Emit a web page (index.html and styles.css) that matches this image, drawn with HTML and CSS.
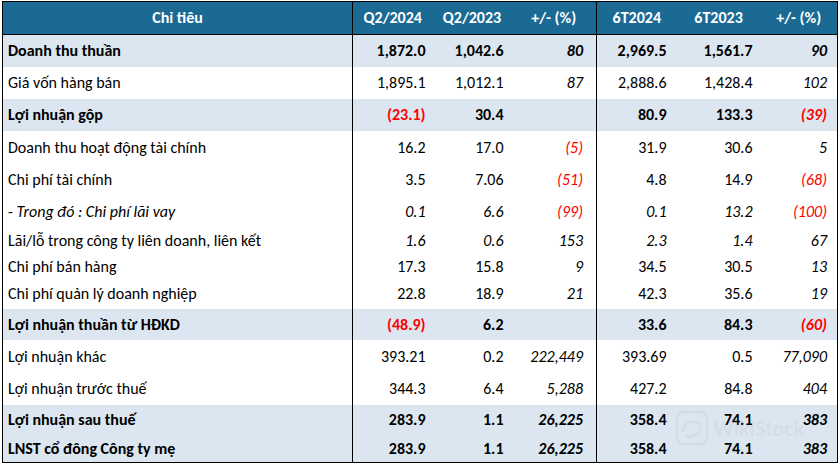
FILE: index.html
```html
<!DOCTYPE html>
<html lang="vi">
<head>
<meta charset="utf-8">
<title>Kết quả kinh doanh</title>
<link rel="stylesheet" href="styles.css">
</head>
<body>
<div class="wrap">
<table class="fin">
  <colgroup>
    <col class="c-label"><col class="c-q24"><col class="c-q23"><col class="c-qp">
    <col class="c-h24"><col class="c-h23"><col class="c-hp">
  </colgroup>
  <thead>
    <tr class="r-head">
      <th>Chỉ tiêu</th><th class="sep-l">Q2/2024</th><th>Q2/2023</th><th>+/- (%)</th>
      <th class="sep-l">6T2024</th><th>6T2023</th><th>+/- (%)</th>
    </tr>
  </thead>
  <tbody>
    <tr class="hl b h32"><td class="lbl">Doanh thu thuần</td><td class="n sep-l p7">1,872.0</td><td class="n p8">1,042.6</td><td class="n pct">80</td><td class="n sep-l p10">2,969.5</td><td class="n p8">1,561.7</td><td class="n pct2">90</td></tr>
    <tr class="h32"><td class="lbl">Giá vốn hàng bán</td><td class="n sep-l p7">1,895.1</td><td class="n p8">1,012.1</td><td class="n pct">87</td><td class="n sep-l p10">2,888.6</td><td class="n p8">1,428.4</td><td class="n pct2">102</td></tr>
    <tr class="hl b h32"><td class="lbl">Lợi nhuận gộp</td><td class="n sep-l p7 neg">(23.1)</td><td class="n p8">30.4</td><td class="n pct"></td><td class="n sep-l p10">80.9</td><td class="n p8">133.3</td><td class="n pct2 neg">(39)</td></tr>
    <tr class="h33"><td class="lbl">Doanh thu hoạt động tài chính</td><td class="n sep-l p7">16.2</td><td class="n p8">17.0</td><td class="n pct neg">(5)</td><td class="n sep-l p10">31.9</td><td class="n p8">30.6</td><td class="n pct2">5</td></tr>
    <tr class="h32"><td class="lbl">Chi phí tài chính</td><td class="n sep-l p7">3.5</td><td class="n p8">7.06</td><td class="n pct neg">(51)</td><td class="n sep-l p10">4.8</td><td class="n p8">14.9</td><td class="n pct2 neg">(68)</td></tr>
    <tr class="it h32"><td class="lbl"><span class="up">- </span>Trong đó : Chi phí lãi vay</td><td class="n sep-l p7">0.1</td><td class="n p8">6.6</td><td class="n pct neg">(99)</td><td class="n sep-l p10">0.1</td><td class="n p8">13.2</td><td class="n pct2 neg">(100)</td></tr>
    <tr class="it h26"><td class="lbl up">Lãi/lỗ trong công ty liên doanh, liên kết</td><td class="n sep-l p7">1.6</td><td class="n p8">0.6</td><td class="n pct">153</td><td class="n sep-l p10">2.3</td><td class="n p8">1.4</td><td class="n pct2">67</td></tr>
    <tr class="h25"><td class="lbl">Chi phí bán hàng</td><td class="n sep-l p7">17.3</td><td class="n p8">15.8</td><td class="n pct">9</td><td class="n sep-l p10">34.5</td><td class="n p8">30.5</td><td class="n pct2">13</td></tr>
    <tr class="h30"><td class="lbl">Chi phí quản lý doanh nghiệp</td><td class="n sep-l p7">22.8</td><td class="n p8">18.9</td><td class="n pct">21</td><td class="n sep-l p10">42.3</td><td class="n p8">35.6</td><td class="n pct2">19</td></tr>
    <tr class="hl b h31"><td class="lbl">Lợi nhuận thuần từ HĐKD</td><td class="n sep-l p7 neg">(48.9)</td><td class="n p8">6.2</td><td class="n pct"></td><td class="n sep-l p10">33.6</td><td class="n p8">84.3</td><td class="n pct2 neg">(60)</td></tr>
    <tr class="h33"><td class="lbl">Lợi nhuận khác</td><td class="n sep-l p7">393.21</td><td class="n p8">0.2</td><td class="n pct">222,449</td><td class="n sep-l p10">393.69</td><td class="n p8">0.5</td><td class="n pct2">77,090</td></tr>
    <tr class="h32"><td class="lbl">Lợi nhuận trước thuế</td><td class="n sep-l p7">344.3</td><td class="n p8">6.4</td><td class="n pct">5,288</td><td class="n sep-l p10">427.2</td><td class="n p8">84.8</td><td class="n pct2">404</td></tr>
    <tr class="hl b h30"><td class="lbl">Lợi nhuận sau thuế</td><td class="n sep-l p7">283.9</td><td class="n p8">1.1</td><td class="n pct">26,225</td><td class="n sep-l p10">358.4</td><td class="n p8">74.1</td><td class="n pct2">383</td></tr>
    <tr class="hl b h27"><td class="lbl">LNST cổ đông Công ty mẹ</td><td class="n sep-l p7">283.9</td><td class="n p8">1.1</td><td class="n pct">26,225</td><td class="n sep-l p10">358.4</td><td class="n p8">74.1</td><td class="n pct2">383</td></tr>
  </tbody>
</table>
<div class="wm" aria-hidden="true">
  <svg width="34" height="36" viewBox="0 0 34 36"><rect x="2" y="2" width="30" height="32" rx="7" fill="none" stroke="#999" stroke-width="2.5"/><path d="M8 22 C8 12 20 9 26 15 M11 26 C18 28 25 23 26 18" fill="none" stroke="#999" stroke-width="2.5"/></svg>
  <span>WikiStock</span>
</div>
</div>
</body>
</html>
```

FILE: styles.css
```css
html, body {
  margin: 0;
  padding: 0;
  background: #ffffff;
}
.wrap {
  position: relative;
  padding: 1px 0 0 2px;
  width: 839px;
  height: 465px;
  box-sizing: border-box;
  overflow: hidden;
}
.fin {
  border-collapse: collapse;
  table-layout: fixed;
  width: 835px;
  font-family: Carlito, Lato, "Liberation Sans", sans-serif;
  font-size: 16px;
  color: #000;
  border: 1px solid #000;
}
.c-label { width: 350px; }
.c-q24 { width: 80px; }
.c-q23 { width: 79px; }
.c-qp { width: 85px; }
.c-h24 { width: 80px; }
.c-h23 { width: 84px; }
.c-hp { width: 77px; }

.fin th, .fin td {
  padding: 0;
  white-space: nowrap;
  overflow: hidden;
  line-height: 1;
}
.r-head th {
  background: #1a6a93;
  color: #fff;
  font-weight: bold;
  text-align: center;
  height: 32px;
  border-bottom: 1px solid #000;
}
.sep-l { border-left: 1px solid #000; }
.lbl { padding-left: 5px !important; text-align: left; }
.n { text-align: right; }
.p7 { padding-right: 7px !important; }
.p8 { padding-right: 8px !important; }
.p10 { padding-right: 10px !important; }
.pct { padding-right: 13px !important; font-style: italic; }
.pct2 { padding-right: 10px !important; font-style: italic; }
.hl td { background: #dce6f0; }
.b td { font-weight: bold; }
.it td { font-style: italic; }
.up { font-style: normal; }
.it td.lbl.up { font-style: normal; }
.neg { color: #ff0000; }

.h25 td { height: 25px; }
.h26 td { height: 26px; }
.h27 td { height: 27px; }
.h30 td { height: 30px; }
.h31 td { height: 31px; }
.h32 td { height: 32px; }
.h33 td { height: 33px; }

.wm {
  position: absolute;
  left: 675px;
  top: 410px;
  display: flex;
  align-items: center;
  gap: 4px;
  opacity: 0.1;
  font-family: Lato, "Liberation Sans", sans-serif;
  font-size: 20px;
  font-weight: bold;
  color: #999;
  pointer-events: none;
}
```
